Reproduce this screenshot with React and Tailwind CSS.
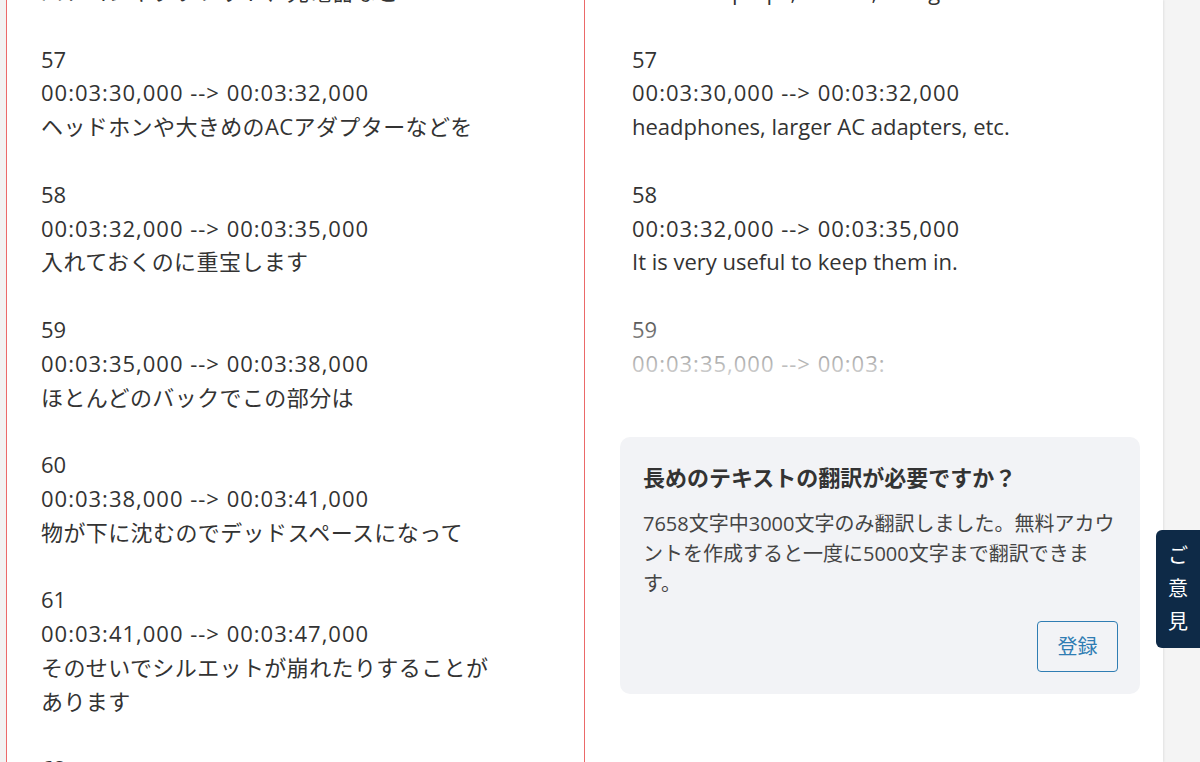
import React from 'react';

const FONT = {
  fontFamily: '"Open Sans", "Noto Sans CJK JP", sans-serif',
};

// Subtitle blocks on both sides
const sourceBlocks = [
  { lines: ['パソコンやタブレット、充電器など'] },
  { lines: ['57', '00:03:30,000 --> 00:03:32,000', 'ヘッドホンや大きめのACアダプターなどを'] },
  { lines: ['58', '00:03:32,000 --> 00:03:35,000', '入れておくのに重宝します'] },
  { lines: ['59', '00:03:35,000 --> 00:03:38,000', 'ほとんどのバックでこの部分は'] },
  { lines: ['60', '00:03:38,000 --> 00:03:41,000', '物が下に沈むのでデッドスペースになって'] },
  { lines: ['61', '00:03:41,000 --> 00:03:47,000', 'そのせいでシルエットが崩れたりすることが', 'あります'] },
  { lines: ['62', '00:03:47,000 --> 00:03:50,000', 'でもこのバッグは'] },
];

// translation stops where the free limit ran out
const targetBlocks = [
  { lines: ['such as laptops, tablets, chargers and so on'] },
  { lines: ['57', '00:03:30,000 --> 00:03:32,000', 'headphones, larger AC adapters, etc.'] },
  { lines: ['58', '00:03:32,000 --> 00:03:35,000', 'It is very useful to keep them in.'] },
  { lines: ['59', '00:03:35,000 --> 00:03:'] },
];

const lineClass = (line) => {
  if (line.includes('-->')) return 'tracking-[1px]';
  if (/[^\x00-\x7f]/.test(line)) return 'tracking-[0.4px]';
  return '';
};

const SubtitleList = ({ blocks }) => (
  <div className="text-[22px] leading-[33.8px] text-[#333333]">
    {blocks.map((block, i) => (
      <div key={i} className="mb-[33.8px]">
        {block.lines.map((line, j) => (
          <div key={j} className={`whitespace-nowrap ${lineClass(line)}`}>{line}</div>
        ))}
      </div>
    ))}
  </div>
);

const SignupCard = () => (
  <div className="bg-[#f2f3f6] rounded-[10px] pt-[24px] pb-[22px] pl-[23px] pr-[20px]">
    <h3 className="text-[22px] leading-[32px] font-bold text-[#333333]">
      長めのテキストの翻訳が必要ですか？
    </h3>
    <p className="mt-[16px] text-[20px] leading-[30px] text-[#444444]">
      7658文字中3000文字のみ翻訳しました。無料アカウントを作成すると一度に5000文字まで翻訳できます。
    </p>
    <div className="flex justify-end mt-[22px] pr-[2px]">
      <button className="w-[81px] h-[51px] border border-[#2f7db3] rounded-[4px] text-[20px] text-[#2f7db3]">
        登録
      </button>
    </div>
  </div>
);

export default function App() {
  return (
    <div style={FONT} className="relative flex h-[762px] w-[1200px] overflow-hidden bg-[#f4f4f4]">
      <div className="w-[6px] shrink-0 bg-[#f2f2f2]" />

      {/* source panel */}
      <div className="w-[579px] shrink-0 bg-white border-l border-r border-[#ec6a6a] pl-[34px]">
        <div className="-mt-[25px]">
          <SubtitleList blocks={sourceBlocks} />
        </div>
      </div>

      {/* translation panel */}
      <div className="w-[578px] shrink-0 bg-white pl-[35px] pr-[23px] shadow-[1px_0_2px_rgba(0,0,0,0.08)]">
        <div className="relative -mt-[25px] h-[420px] overflow-hidden pl-[12px]">
          <SubtitleList blocks={targetBlocks} />
          <div className="absolute left-0 right-0 bottom-0 h-[90px] bg-gradient-to-b from-white/0 to-white" />
        </div>
        <div className="mt-[42px]">
          <SignupCard />
        </div>
      </div>

      {/* feedback tab */}
      <div className="absolute right-0 top-[530px] w-[44px] h-[118px] bg-[#0e2a47] rounded-l-[6px] flex flex-col items-center justify-center gap-[3px] text-white text-[20px] leading-[30px]">
        <span>ご</span>
        <span>意</span>
        <span>見</span>
      </div>
    </div>
  );
}
